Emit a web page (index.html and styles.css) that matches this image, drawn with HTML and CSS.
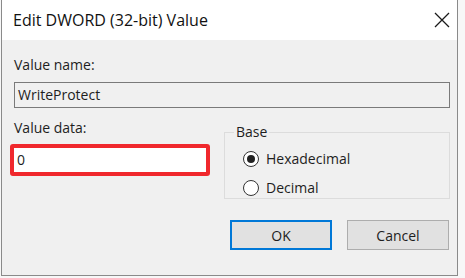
FILE: index.html
```html
<!DOCTYPE html>
<html lang="en">
<head>
  <meta charset="UTF-8">
  <title>Edit DWORD (32-bit) Value</title>
  <link rel="stylesheet" href="styles.css">
</head>
<body>
  <div class="window">
    <div class="titlebar">
      <span class="title">Edit DWORD (32-bit) Value</span>
      <button class="close" aria-label="Close">
        <svg width="16" height="16" viewBox="0 0 16 16">
          <path d="M1 1 L15 15 M15 1 L1 15" stroke="#1a1a1a" stroke-width="1.3" fill="none"/>
        </svg>
      </button>
    </div>

    <div class="content">
      <label class="label">Value name:</label>
      <div class="name-box">WriteProtect</div>

      <div class="data-row">
        <div class="data-col">
          <label class="label data-label">Value data:</label>
          <div class="highlight">
            <div class="data-box">0</div>
          </div>
        </div>

        <fieldset class="base">
          <legend>Base</legend>
          <div class="radio checked"><span class="dot"></span>Hexadecimal</div>
          <div class="radio"><span class="dot"></span>Decimal</div>
        </fieldset>
      </div>

      <div class="buttons">
        <button class="btn default">OK</button>
        <button class="btn">Cancel</button>
      </div>
    </div>
  </div>
</body>
</html>
```

FILE: styles.css
```css
body {
  margin: 0;
  background: #f7f7f7;
  font-family: "Open Sans", "Noto Sans", sans-serif;
  color: #1e1e1e;
}

.window {
  width: 455px;
  height: 275px;
  margin-left: 1px;
  background: #f0f0f0;
  border: 1px solid #8a8a8a;
  border-top: none;
  display: flex;
  flex-direction: column;
}

/* Title bar */
.titlebar {
  height: 40px;
  background: #fff;
  display: flex;
  align-items: center;
  justify-content: space-between;
  padding-left: 11px;
}
.title {
  font-size: 16px;
  color: #111;
}
.close {
  width: 30px;
  height: 40px;
  border: none;
  background: transparent;
  display: flex;
  align-items: center;
  justify-content: center;
  padding: 0;
}

.content {
  padding: 16px 7px 0 12px;
  display: flex;
  flex-direction: column;
}

.label {
  font-size: 14px;
  line-height: 18px;
  height: 18px;
  display: block;
}

.name-box {
  margin-top: 8px;
  height: 24px;
  border: 1px solid #7a7a7a;
  font-size: 14px;
  line-height: 24px;
  padding-left: 3px;
  background: #f0f0f0;
}

.data-row {
  display: flex;
  gap: 14px;
}

.data-col {
  width: 196px;
  display: flex;
  flex-direction: column;
}
.data-label {
  margin-top: 11px;
}

/* red annotation around the input */
.highlight {
  margin: 7px 0 0 -4px;
  border: 4px solid #f0282d;
  border-radius: 3px;
}
.data-box {
  height: 24px;
  background: #fff;
  font-size: 14px;
  line-height: 24px;
  padding-left: 3px;
}

/* Base group */
.base {
  flex: 1;
  margin: 15px 0 0 0;
  padding: 6px 0 0 18px;
  height: 76px;
  box-sizing: border-box;
  border: 1px solid #dcdcdc;
  min-width: 0;
}
.base legend {
  font-size: 14px;
  line-height: 18px;
  padding: 0 2px;
  margin-left: -9px;
}

.radio {
  display: flex;
  align-items: center;
  gap: 7px;
  height: 29px;
  font-size: 14px;
  margin-top: -3px;
}
.radio + .radio {
  margin-top: 0;
}
.dot {
  width: 14px;
  height: 14px;
  border: 1px solid #333;
  border-radius: 50%;
  background: #fff;
  display: flex;
  align-items: center;
  justify-content: center;
}
.radio.checked .dot::after {
  content: "";
  width: 8px;
  height: 8px;
  border-radius: 50%;
  background: #222;
}

.buttons {
  display: flex;
  justify-content: flex-end;
  gap: 15px;
  margin-top: 21px;
  padding-right: 1px;
}
.btn {
  width: 102px;
  height: 30px;
  background: #e1e1e1;
  border: 1px solid #adadad;
  font-family: inherit;
  font-size: 14px;
  color: #1e1e1e;
  padding: 0;
}
.btn.default {
  border: 2px solid #0078d7;
}
```
